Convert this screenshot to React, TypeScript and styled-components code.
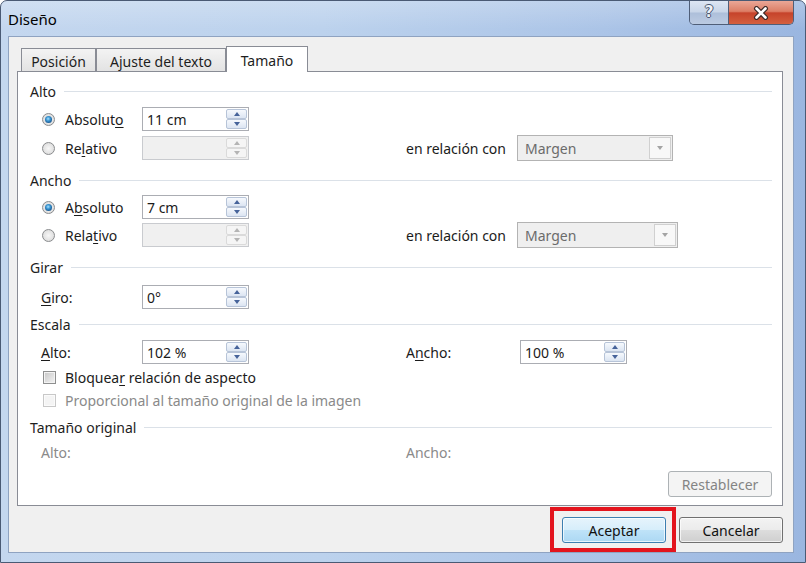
import React from 'react';
import styled, { createGlobalStyle } from 'styled-components';

const GlobalStyle = createGlobalStyle`
  html, body { margin: 0; padding: 0; background: #ffffff; overflow: hidden; }
  body { font-family: "Noto Sans", "Open Sans", sans-serif; font-size: 14px; color: #1b1b1b; }
  * { box-sizing: border-box; }
`;

const Window = styled.div`
  width: 806px;
  height: 563px;
  display: flex;
  flex-direction: column;
  border: 1px solid #4a5a74;
  border-radius: 7px 7px 0 0;
  background: linear-gradient(to right, #c4d7ef 0%, #bcd2ed 40%, #abc4e7 75%, #9ab6e0 100%);
  overflow: hidden;
`;

const TitleBar = styled.div`
  height: 35px;
  flex: none;
  display: flex;
  justify-content: space-between;
  align-items: flex-start;
  padding-left: 7px;
  background: linear-gradient(to bottom, rgba(255, 255, 255, 0.22), rgba(255, 255, 255, 0) 80%);
`;

const Title = styled.div`
  font-size: 15px;
  line-height: 20px;
  padding-top: 8px;
  color: #000000;
`;

const CaptionGroup = styled.div`
  display: flex;
  margin-right: 11px;
  height: 24px;
  border: 1px solid #4f5e78;
  border-top: none;
  border-radius: 0 0 5px 5px;
  overflow: hidden;
`;

const CaptionButton = styled.div<{ $kind: 'help' | 'close' }>`
  width: ${p => (p.$kind === 'help' ? 38 : 65)}px;
  height: 100%;
  display: flex;
  align-items: center;
  justify-content: center;
  background: ${p =>
    p.$kind === 'help'
      ? 'linear-gradient(#dde6f3 0%, #c8d5e8 48%, #adbfda 52%, #bccbe2 100%)'
      : 'linear-gradient(#eaa797 0%, #dc7e66 45%, #c6432b 52%, #d4603f 100%)'};
  & + & { border-left: 1px solid #4f5e78; }
`;

const HelpGlyph = styled.span`
  font-family: "DejaVu Sans", sans-serif;
  font-weight: bold;
  font-size: 15px;
  line-height: 1;
  color: #eef1f6;
  text-shadow: 1px 0 0 #4a5670, -1px 0 0 #4a5670, 0 1px 0 #4a5670, 0 -1px 0 #4a5670;
`;

const Client = styled.div`
  flex: 1;
  margin: 0 11px 9px 7px;
  border: 1px solid #8fa3c1;
  background: #f0f0f0;
  display: flex;
  flex-direction: column;
  padding: 9px 10px 0 8px;
`;

const TabStrip = styled.div`
  height: 25px;
  flex: none;
  display: flex;
  align-items: flex-end;
  padding-left: 4px;
  position: relative;
  z-index: 1;
`;

const Tab = styled.div<{ $w: number; $active?: boolean }>`
  width: ${p => p.$w}px;
  height: ${p => (p.$active ? 26 : 23)}px;
  margin-bottom: ${p => (p.$active ? -1 : 0)}px;
  border: 1px solid #898c95;
  border-bottom: none;
  background: ${p => (p.$active ? '#ffffff' : 'linear-gradient(#f3f3f3, #e3e3e3)')};
  display: flex;
  align-items: center;
  justify-content: center;
  padding-top: ${p => (p.$active ? 1 : 3)}px;
  color: #1e1e1e;
`;

const Panel = styled.div`
  height: 435px;
  flex: none;
  border: 1px solid #898c95;
  background: #ffffff;
  padding: 8px 10px 8px 12px;
  display: flex;
  flex-direction: column;
`;

const Row = styled.div<{ $mt?: number }>`
  height: 22px;
  flex: none;
  display: flex;
  align-items: center;
  margin-top: ${p => p.$mt ?? 0}px;
`;

const GroupHeader = styled(Row)`
  gap: 8px;
  color: #1e1e1e;
  &::after {
    content: '';
    flex: 1;
    height: 1px;
    background: #dbe1e8;
  }
`;

const LeftCell = styled.div<{ $indent: number; $wide?: boolean }>`
  width: ${p => (p.$wide ? 'auto' : '112px')};
  flex: none;
  display: flex;
  align-items: center;
  padding-left: ${p => p.$indent}px;
`;

const MidCell = styled.div`
  width: 264px;
  flex: none;
  display: flex;
  align-items: center;
`;

const RightLabel = styled.div<{ $w: number }>`
  width: ${p => p.$w}px;
  flex: none;
`;

const Label = styled.span<{ $muted?: boolean }>`
  color: ${p => (p.$muted ? '#8a8a8a' : '#1b1b1b')};
  white-space: nowrap;
`;

const Key = styled.span`
  text-decoration: underline;
  text-underline-offset: 2px;
`;

const RadioCircle = styled.span<{ $checked?: boolean }>`
  width: 13px;
  height: 13px;
  flex: none;
  border-radius: 50%;
  border: 1px solid #8a8c8e;
  background: radial-gradient(circle at 50% 50%, #f7f7f7 0%, #e3e3e3 60%, #cfcfcf 100%);
  display: flex;
  align-items: center;
  justify-content: center;
  margin-right: 10px;
  &::after {
    content: '';
    display: ${p => (p.$checked ? 'block' : 'none')};
    width: 7px;
    height: 7px;
    border-radius: 50%;
    background: radial-gradient(circle at 45% 40%, #a8e2ff 0%, #3d98d4 35%, #17568f 75%, #0f3a66 100%);
  }
`;

const CheckBox = styled.span<{ $disabled?: boolean }>`
  width: 13px;
  height: 13px;
  flex: none;
  margin-right: 9px;
  border: 1px solid ${p => (p.$disabled ? '#c8c8c8' : '#8e8f8f')};
  background: ${p => (p.$disabled ? '#f4f4f4' : 'linear-gradient(135deg, #c6c6c6, #f4f4f4)')};
  box-shadow: inset 0 0 0 1px ${p => (p.$disabled ? '#fbfbfb' : '#f3f3f3')};
`;

const SpinBox = styled.div<{ $disabled?: boolean }>`
  width: 107px;
  height: 24px;
  flex: none;
  display: flex;
  align-items: stretch;
  border: 1px solid ${p => (p.$disabled ? '#c9cbcf' : '#abadb3')};
  background: ${p => (p.$disabled ? '#f0f0f0' : '#ffffff')};
`;

const SpinText = styled.div`
  flex: 1;
  display: flex;
  align-items: center;
  padding-left: 4px;
  color: #1b1b1b;
`;

const SpinButtons = styled.div`
  width: 21px;
  flex: none;
  display: flex;
  flex-direction: column;
  margin: 1px 1px 1px 0;
`;

const SpinBtn = styled.div<{ $disabled?: boolean }>`
  flex: 1;
  display: flex;
  align-items: center;
  justify-content: center;
  border: 1px solid ${p => (p.$disabled ? '#dadada' : '#b7c4d8')};
  border-radius: 2px;
  background: ${p => (p.$disabled ? '#f5f5f5' : 'linear-gradient(#f6f9fd, #dce5f2)')};
`;

const Arrow = styled.span<{ $dir: 'up' | 'down'; $color: string }>`
  width: 0;
  height: 0;
  border-left: 3px solid transparent;
  border-right: 3px solid transparent;
  ${p =>
    p.$dir === 'up'
      ? `border-bottom: 4px solid ${p.$color};`
      : `border-top: 4px solid ${p.$color};`}
`;

const Combo = styled.div<{ $w: number }>`
  width: ${p => p.$w}px;
  height: 26px;
  flex: none;
  display: flex;
  align-items: stretch;
  border: 1px solid #b3b3b3;
  background: #efefef;
  color: #6b6b6b;
`;

const ComboText = styled.div`
  flex: 1;
  display: flex;
  align-items: center;
  padding-left: 7px;
`;

const ComboButton = styled.div`
  width: 22px;
  flex: none;
  margin: 1px;
  border: 1px solid #d0d0d0;
  background: #f8f8f8;
  display: flex;
  align-items: center;
  justify-content: center;
`;

const ButtonRow = styled.div<{ $mt?: number }>`
  flex: none;
  display: flex;
  justify-content: flex-end;
  margin-top: ${p => p.$mt ?? 0}px;
`;

const PushButton = styled.div<{ $variant: 'default' | 'normal' | 'disabled' }>`
  width: 104px;
  height: 26px;
  flex: none;
  display: flex;
  align-items: center;
  justify-content: center;
  border-radius: 3px;
  border: 1px solid
    ${p => (p.$variant === 'default' ? '#3c7fb1' : p.$variant === 'normal' ? '#707070' : '#adb2b5')};
  background: ${p =>
    p.$variant === 'default'
      ? 'linear-gradient(#e6f4fc 0%, #d6eefb 50%, #bfe3f8 50%, #acd8f3 100%)'
      : p.$variant === 'normal'
      ? 'linear-gradient(#f3f3f3 0%, #ebebeb 50%, #dddddd 50%, #cfcfcf 100%)'
      : '#f4f4f4'};
  box-shadow: inset 0 0 0 1px
    ${p => (p.$variant === 'disabled' ? 'rgba(255,255,255,0)' : 'rgba(255,255,255,0.7)')};
  color: ${p => (p.$variant === 'disabled' ? '#848484' : '#111111')};
`;

const Footer = styled.div`
  flex: none;
  display: flex;
  justify-content: flex-end;
  gap: 13px;
  padding-top: 11px;
`;

const ButtonWrap = styled.div`
  position: relative;
  display: flex;
`;

const Highlight = styled.div`
  position: absolute;
  top: -10px;
  bottom: -9px;
  left: -12px;
  right: -10px;
  border: 4px solid #e3141d;
  pointer-events: none;
`;

const Spin: React.FC<{ value?: string; disabled?: boolean }> = ({ value, disabled }) => {
  const c = disabled ? '#b4b4b4' : '#46639a';
  return (
    <SpinBox $disabled={disabled}>
      <SpinText>{value}</SpinText>
      <SpinButtons>
        <SpinBtn $disabled={disabled}>
          <Arrow $dir="up" $color={c} />
        </SpinBtn>
        <SpinBtn $disabled={disabled}>
          <Arrow $dir="down" $color={c} />
        </SpinBtn>
      </SpinButtons>
    </SpinBox>
  );
};

const Dropdown: React.FC<{ w: number; value: string }> = ({ w, value }) => (
  <Combo $w={w}>
    <ComboText>{value}</ComboText>
    <ComboButton>
      <Arrow $dir="down" $color="#a4a4a4" />
    </ComboButton>
  </Combo>
);

const CloseGlyph = () => (
  <svg width="16" height="14" viewBox="0 0 16 14">
    <path d="M3.5 2.5 L12.5 11.5 M12.5 2.5 L3.5 11.5" stroke="#3d2a28" strokeWidth="5" strokeLinecap="round" fill="none" />
    <path d="M3.5 2.5 L12.5 11.5 M12.5 2.5 L3.5 11.5" stroke="#ffffff" strokeWidth="2.6" strokeLinecap="round" fill="none" />
  </svg>
);

export default function App() {
  return (
    <>
      <GlobalStyle />
      <Window>
        <TitleBar>
          <Title>Diseño</Title>
          <CaptionGroup>
            <CaptionButton $kind="help">
              <HelpGlyph>?</HelpGlyph>
            </CaptionButton>
            <CaptionButton $kind="close">
              <CloseGlyph />
            </CaptionButton>
          </CaptionGroup>
        </TitleBar>
        <Client>
          <TabStrip>
            <Tab $w={75}>Posición</Tab>
            <Tab $w={130}>Ajuste del texto</Tab>
            <Tab $w={82} $active>
              Tamaño
            </Tab>
          </TabStrip>
          <Panel>
            <GroupHeader>Alto</GroupHeader>
            <Row $mt={6}>
              <LeftCell $indent={12}>
                <RadioCircle $checked />
                <Label>
                  Absolut<Key>o</Key>
                </Label>
              </LeftCell>
              <MidCell>
                <Spin value="11 cm" />
              </MidCell>
            </Row>
            <Row $mt={7}>
              <LeftCell $indent={12}>
                <RadioCircle />
                <Label>
                  Re<Key>l</Key>ativo
                </Label>
              </LeftCell>
              <MidCell>
                <Spin disabled />
              </MidCell>
              <RightLabel $w={111}>
                <Label>en relación con</Label>
              </RightLabel>
              <Dropdown w={156} value="Margen" />
            </Row>

            <GroupHeader $mt={10}>Ancho</GroupHeader>
            <Row $mt={5}>
              <LeftCell $indent={12}>
                <RadioCircle $checked />
                <Label>
                  A<Key>b</Key>soluto
                </Label>
              </LeftCell>
              <MidCell>
                <Spin value="7 cm" />
              </MidCell>
            </Row>
            <Row $mt={6}>
              <LeftCell $indent={12}>
                <RadioCircle />
                <Label>
                  Rela<Key>t</Key>ivo
                </Label>
              </LeftCell>
              <MidCell>
                <Spin disabled />
              </MidCell>
              <RightLabel $w={111}>
                <Label>en relación con</Label>
              </RightLabel>
              <Dropdown w={161} value="Margen" />
            </Row>

            <GroupHeader $mt={10}>Girar</GroupHeader>
            <Row $mt={8}>
              <LeftCell $indent={11}>
                <Label>
                  <Key>G</Key>iro:
                </Label>
              </LeftCell>
              <MidCell>
                <Spin value="0°" />
              </MidCell>
            </Row>

            <GroupHeader $mt={5}>Escala</GroupHeader>
            <Row $mt={6}>
              <LeftCell $indent={11}>
                <Label>
                  <Key>A</Key>lto:
                </Label>
              </LeftCell>
              <MidCell>
                <Spin value="102 %" />
              </MidCell>
              <RightLabel $w={114}>
                <Label>
                  A<Key>n</Key>cho:
                </Label>
              </RightLabel>
              <Spin value="100 %" />
            </Row>
            <Row $mt={3}>
              <LeftCell $indent={13} $wide>
                <CheckBox />
                <Label>
                  Bloquea<Key>r</Key> relación de aspecto
                </Label>
              </LeftCell>
            </Row>
            <Row $mt={1}>
              <LeftCell $indent={13} $wide>
                <CheckBox $disabled />
                <Label $muted>Proporcional al tamaño original de la imagen</Label>
              </LeftCell>
            </Row>

            <GroupHeader $mt={5}>Tamaño original</GroupHeader>
            <Row $mt={3}>
              <LeftCell $indent={11}>
                <Label $muted>Alto:</Label>
              </LeftCell>
              <MidCell />
              <RightLabel $w={114}>
                <Label $muted>Ancho:</Label>
              </RightLabel>
            </Row>

            <ButtonRow $mt={8}>
              <PushButton $variant="disabled">Restablecer</PushButton>
            </ButtonRow>
          </Panel>
          <Footer>
            <ButtonWrap>
              <PushButton $variant="default">Aceptar</PushButton>
              <Highlight />
            </ButtonWrap>
            <PushButton $variant="normal">Cancelar</PushButton>
          </Footer>
        </Client>
      </Window>
    </>
  );
}
